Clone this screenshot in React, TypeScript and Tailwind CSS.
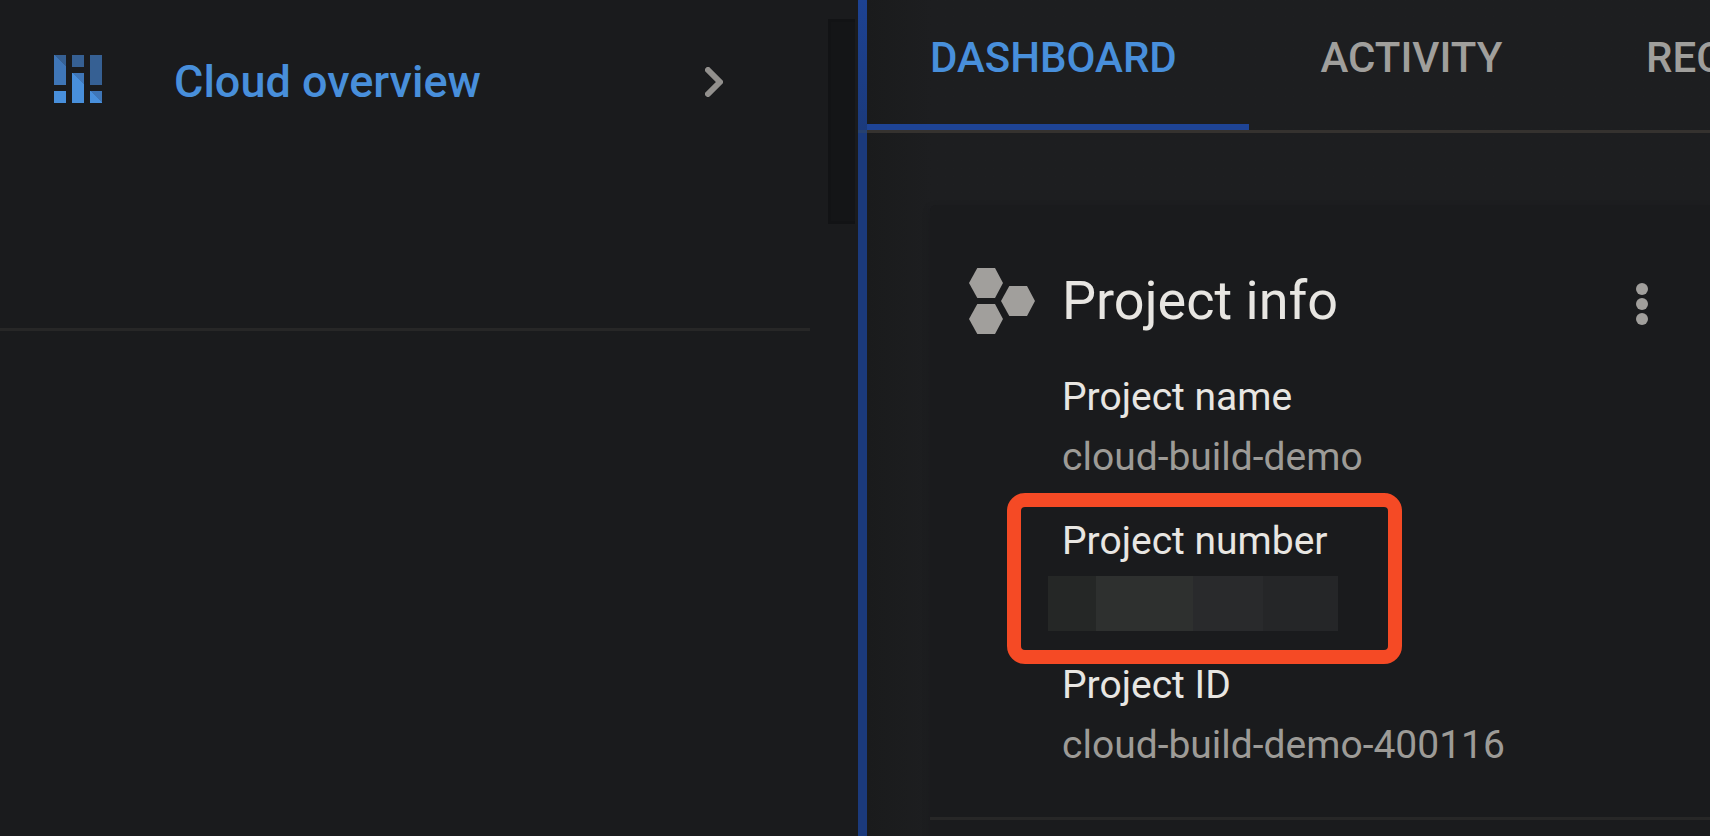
import React from "react";

function OverviewIcon() {
  return (
    <svg width="48" height="48" viewBox="0 0 48 48" shapeRendering="crispEdges" className="shrink-0">
      <path fill="#3f76b7" d="M0 0h12v30H0zM36 36h12v12H36z" />
      <path fill="#366093" d="M0 0h12v12zM18 0h12v12H18zM36 0h12v30H36z" />
      <path fill="#488fdb" d="M0 36h12v12H0zM18 18h12v30H18zM36 36l12 12H36z" />
      <path fill="#3f76b7" d="M18 18h12v12z" />
    </svg>
  );
}

function ProjectIcon() {
  return (
    <svg width="66" height="66" viewBox="0 0 66 66" className="shrink-0" fill="#a19f9c">
      <path d="M8.3 0H26l8 15-8 15H8.3L0 15z" />
      <path d="M40.3 18H58l8 15-8 15H40.3L32 33z" />
      <path d="M8.3 36H26l8 15-8 15H8.3L0 51z" />
    </svg>
  );
}

function Label({ children }: { children: React.ReactNode }) {
  return <dt className="whitespace-nowrap text-[#e8e6e2]">{children}</dt>;
}

function Value({ children }: { children: React.ReactNode }) {
  return <dd className="whitespace-nowrap text-[#9d9b97]">{children}</dd>;
}

export default function App() {
  return (
    <div className="flex h-[836px] w-[1710px] overflow-hidden bg-[#1a1b1d] font-[Roboto,sans-serif]">
      <aside className="flex h-full w-[858px] shrink-0 justify-between">
        <div className="w-[810px]">
          <div className="flex h-[328px] items-start pl-[54px] pt-[52px]">
            <div className="pt-[3px]">
              <OverviewIcon />
            </div>
            <a className="ml-[72px] w-[531px] whitespace-nowrap text-[45px] leading-[60px] font-medium text-[#488fdb]">
              Cloud overview
            </a>
            <svg width="18" height="30" viewBox="0 0 18 30" className="mt-[15px] shrink-0">
              <path d="M3 3l12 12L3 27" fill="none" stroke="#92908d" strokeWidth="6" strokeLinecap="round" strokeLinejoin="round" />
            </svg>
          </div>
          <div className="h-[3px] bg-[#272727]" />
        </div>
        <div className="mr-[3px] mt-[19px] h-[205px] w-[27px] border-y-[3px] border-l-[3px] border-[#121315] bg-[#141517]" />
      </aside>

      <div className="h-full w-[9px] shrink-0 bg-[#1b3a7c]">
        <div className="h-[130px] bg-linear-to-b from-[#1d4292] to-[#1b3a7c]" />
        <div className="h-[3px] bg-[#27416f]" />
      </div>

      <main className="flex min-w-0 flex-1 flex-col bg-linear-to-r from-[#1a1b1c] to-[#1d1e20] to-[64px]">
        <nav className="flex h-[133px] shrink-0 border-b-[3px] border-[#35322f] text-[42px] leading-[60px] font-medium whitespace-nowrap">
          <a className="w-[382px] shrink-0 border-b-[6px] border-[#1e4496] pl-[63px] pt-[28px] text-[#488fdb]">DASHBOARD</a>
          <a className="w-[325px] shrink-0 pl-[71.5px] pt-[28px] text-[#a09f9c]">ACTIVITY</a>
          <a className="shrink-0 pl-[72px] pt-[28px] text-[#a09f9c]">RECOMMENDATIONS</a>
        </nav>

        <section className="ml-[63px] mt-[72px] flex-1 rounded-tl-[6px] bg-[#1a1b1d] shadow-[0_3px_6px_#1a1b1d]">
          <header className="flex h-[162px] items-start pl-[39px] pt-[63px]">
            <ProjectIcon />
            <h2 className="ml-[27px] mt-[3px] w-[574px] whitespace-nowrap text-[54px] leading-[60px] text-[#e8e6e2]">
              Project info
            </h2>
            <svg width="12" height="42" viewBox="0 0 12 42" className="mt-[15px] shrink-0" fill="#a19f9c">
              <circle cx="6" cy="6" r="6" />
              <circle cx="6" cy="21" r="6" />
              <circle cx="6" cy="36" r="6" />
            </svg>
          </header>
          <dl className="flex h-[450px] flex-col gap-[24px] pl-[132px] text-[39px] leading-[60px]">
            <div>
              <Label>Project name</Label>
              <Value>cloud-build-demo</Value>
            </div>
            <div className="relative">
              <Label>Project number</Label>
              <dd className="-ml-[14px] flex h-[60px] pt-[5px]">
                <span className="w-[48px] bg-[#252726]" />
                <span className="w-[97px] bg-[#2e302f]" />
                <span className="w-[70px] bg-[#292a2c]" />
                <span className="w-[75px] bg-[#252628]" />
              </dd>
              <div className="absolute -left-[55px] -top-[18px] h-[171px] w-[395px] rounded-[18px] border-[14px] border-[#f54a25]" />
            </div>
            <div>
              <Label>Project ID</Label>
              <Value>cloud-build-demo-400116</Value>
            </div>
          </dl>
          <div className="h-[3px] bg-[#272727]" />
        </section>
      </main>
    </div>
  );
}
